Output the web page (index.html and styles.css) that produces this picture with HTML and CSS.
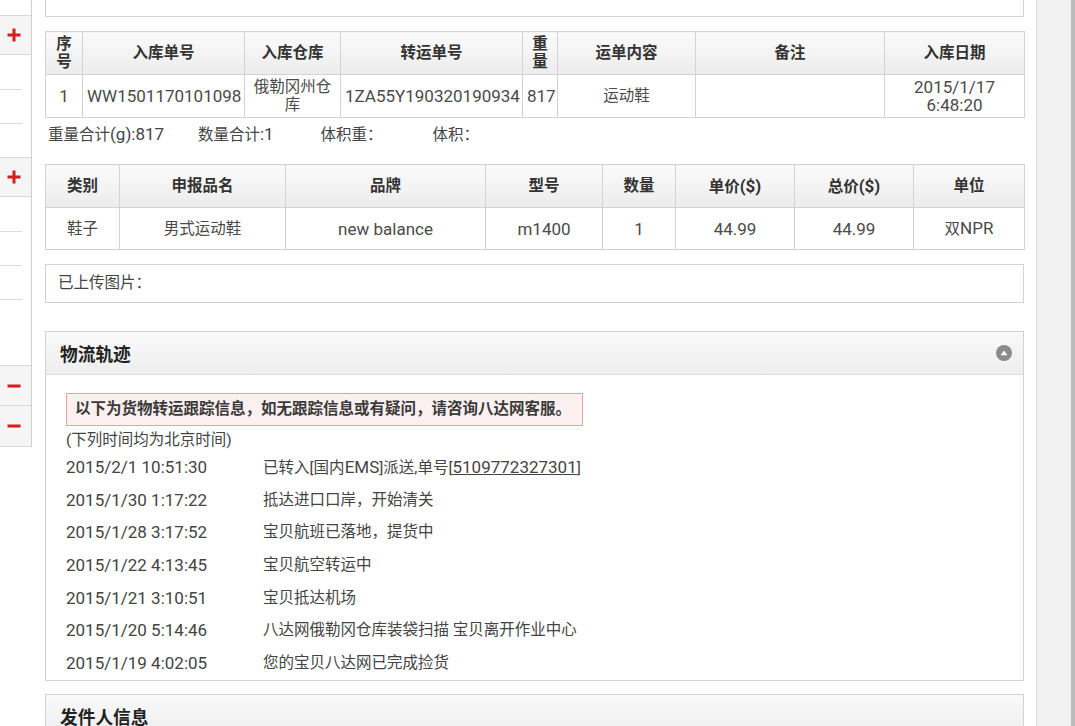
FILE: index.html
```html
<!DOCTYPE html>
<html lang="zh-CN">
<head>
<meta charset="utf-8">
<title>包裹详情</title>
<link rel="stylesheet" href="styles.css">
</head>
<body>
<div class="page">
  <aside class="sidebar">
    <div class="sb-top"></div>
    <div class="sb-head"><svg class="ico" width="14" height="14" viewBox="0 0 14 14"><path d="M7 0.5V13.5M0.5 7H13.5" stroke="#d21e1e" stroke-width="3"/></svg></div>
    <div class="sb-item"></div>
    <div class="sb-item"></div>
    <div class="sb-item"></div>
    <div class="sb-head"><svg class="ico" width="14" height="14" viewBox="0 0 14 14"><path d="M7 0.5V13.5M0.5 7H13.5" stroke="#d21e1e" stroke-width="3"/></svg></div>
    <div class="sb-item"></div>
    <div class="sb-item"></div>
    <div class="sb-item"></div>
    <div class="sb-item sb-tall"></div>
    <div class="sb-head sb-open"><svg class="ico" width="14" height="14" viewBox="0 0 14 14"><path d="M0.5 7H13.5" stroke="#d21e1e" stroke-width="3"/></svg></div>
    <div class="sb-head sb-open sb-last"><svg class="ico" width="14" height="14" viewBox="0 0 14 14"><path d="M0.5 7H13.5" stroke="#d21e1e" stroke-width="3"/></svg></div>
  </aside>

  <main class="main">
    <div class="topbox"></div>

    <table class="grid t1">
      <colgroup>
        <col style="width:37px"><col style="width:162px"><col style="width:96px"><col style="width:182px">
        <col style="width:35px"><col style="width:138px"><col style="width:189px"><col style="width:140px">
      </colgroup>
      <thead>
        <tr><th>序号</th><th>入库单号</th><th>入库仓库</th><th>转运单号</th><th>重量</th><th>运单内容</th><th>备注</th><th>入库日期</th></tr>
      </thead>
      <tbody>
        <tr>
          <td class="en">1</td>
          <td class="en">WW1501170101098</td>
          <td>俄勒冈州仓库</td>
          <td class="en">1ZA55Y190320190934</td>
          <td class="en">817</td>
          <td>运动鞋</td>
          <td></td>
          <td class="en">2015/1/17 6:48:20</td>
        </tr>
      </tbody>
    </table>

    <div class="summary">
      <span class="s1">重量合计<span class="en">(g):817</span></span>
      <span class="s2">数量合计<span class="en">:1</span></span>
      <span class="s3">体积重：</span>
      <span class="s4">体积：</span>
    </div>

    <table class="grid t2">
      <colgroup>
        <col style="width:74px"><col style="width:166px"><col style="width:200px"><col style="width:117px">
        <col style="width:73px"><col style="width:119px"><col style="width:119px"><col style="width:111px">
      </colgroup>
      <thead>
        <tr><th>类别</th><th>申报品名</th><th>品牌</th><th>型号</th><th>数量</th><th>单价<span class="en">($)</span></th><th>总价<span class="en">($)</span></th><th>单位</th></tr>
      </thead>
      <tbody>
        <tr>
          <td>鞋子</td>
          <td>男式运动鞋</td>
          <td class="en">new balance</td>
          <td class="en">m1400</td>
          <td class="en">1</td>
          <td class="en">44.99</td>
          <td class="en">44.99</td>
          <td>双<span class="en">NPR</span></td>
        </tr>
      </tbody>
    </table>

    <div class="upload">已上传图片：</div>

    <section class="panel">
      <div class="panel-head">
        <h3>物流轨迹</h3>
        <span class="toggle"><svg width="16" height="16" viewBox="0 0 16 16"><circle cx="8" cy="8" r="8" fill="#8b8b8b"/><path d="M4.6 10.2L8 5.4L11.4 10.2Z" fill="#fff"/></svg></span>
      </div>
      <div class="panel-body">
        <div class="notice">以下为货物转运跟踪信息，如无跟踪信息或有疑问，请咨询八达网客服。</div>
        <div class="tz">(下列时间均为北京时间)</div>
        <ul class="track">
          <li><span class="t en">2015/2/1 10:51:30</span><span class="d">已转入[国内<span class="en">EMS</span>]派送,单号[<a class="en" href="#">5109772327301</a>]</span></li>
          <li><span class="t en">2015/1/30 1:17:22</span><span class="d">抵达进口口岸，开始清关</span></li>
          <li><span class="t en">2015/1/28 3:17:52</span><span class="d">宝贝航班已落地，提货中</span></li>
          <li><span class="t en">2015/1/22 4:13:45</span><span class="d">宝贝航空转运中</span></li>
          <li><span class="t en">2015/1/21 3:10:51</span><span class="d">宝贝抵达机场</span></li>
          <li><span class="t en">2015/1/20 5:14:46</span><span class="d">八达网俄勒冈仓库装袋扫描 宝贝离开作业中心</span></li>
          <li><span class="t en">2015/1/19 4:02:05</span><span class="d">您的宝贝八达网已完成捡货</span></li>
        </ul>
      </div>
    </section>

    <section class="panel">
      <div class="panel-head">
        <h3>发件人信息</h3>
      </div>
      <div class="panel-body tall"></div>
    </section>
  </main>

  <div class="gutter"></div>
</div>
</body>
</html>
```

FILE: styles.css
```css
* { box-sizing: border-box; }
html, body { margin: 0; padding: 0; }
body {
  font-family: Roboto, "Noto Sans CJK SC", sans-serif;
  font-size: 15.5px;
  color: #444;
  background: #fff;
  overflow: hidden;
}
.en { font-size: 17px; }

.page { display: flex; align-items: stretch; min-height: 726px; }

/* left accordion menu */
.sidebar {
  width: 32px;
  flex: none;
  align-self: flex-start;
  border-right: 1px solid #cfcfcf;
}
.sb-top { height: 15px; }
.sb-head {
  height: 40px;
  border-top: 1px solid #d8d8d8;
  border-bottom: 1px solid #d8d8d8;
  background: #f5f5f5;
  display: flex;
  align-items: center;
  padding-left: 7px;
}
.sb-head.sb-open { height: 41px; }
.sb-head.sb-last { border-top: 0; }
.ico { display: block; }
.sb-item { height: 34px; }
.sb-item + .sb-item {
  background: linear-gradient(#dcdcdc, #dcdcdc) no-repeat 0 0 / 22px 1px;
}
.sb-item.sb-tall { height: 66px; }

/* main column */
.main {
  flex: 1;
  min-width: 0;
  padding: 0 12px 0 13px;
}
.topbox {
  height: 17px;
  border: 1px solid #d3d3d3;
  border-top: 0;
}

.grid {
  width: 100%;
  table-layout: fixed;
  border-collapse: collapse;
  border: 1px solid #cdcdcd;
}
.grid th, .grid td {
  border: 1px solid #d3d3d3;
  padding: 0 4px;
  text-align: center;
  vertical-align: middle;
  line-height: 18px;
  white-space: normal;
}
.grid th {
  height: 43px;
  background: linear-gradient(#fbfbfb, #ececec);
  color: #333;
  font-weight: bold;
}
.grid td { height: 43px; color: #4a4a4a; }
.t1 { margin-top: 14px; }
.t2 td { height: 42px; }

.summary {
  padding: 4px 0 0 3px;
  line-height: 24px;
  height: 46px;
  white-space: nowrap;
}
.summary .s1 { margin-right: 30px; }
.summary .s2 { margin-right: 43px; }
.summary .s3 { margin-right: 46px; }

.upload {
  margin-top: 14px;
  height: 39px;
  line-height: 37px;
  border: 1px solid #d3d3d3;
  padding-left: 12px;
}

.panel {
  margin-top: 28px;
  border: 1px solid #d3d3d3;
}
.panel + .panel { margin-top: 13px; }
.panel-head {
  height: 43px;
  border-bottom: 1px solid #dcdcdc;
  background: linear-gradient(#f9f9f9, #eeeeee);
  display: flex;
  align-items: center;
  justify-content: space-between;
  padding: 0 11px 0 14px;
}
.panel-head h3 {
  margin: 0;
  font-size: 17.7px;
  font-weight: bold;
  color: #222;
}
.toggle svg { display: block; }

.panel-body { padding: 18px 20px 0 20px; }
.panel-body.tall { height: 200px; }
.notice {
  display: inline-block;
  height: 33px;
  line-height: 31px;
  padding: 0 11px 0 8px;
  border: 1px solid #e6a3a3;
  background: #fcf0f0;
  color: #3a3a3a;
  font-weight: bold;
}
.tz {
  margin-top: 3px;
  line-height: 22px;
  height: 22px;
}
.track {
  list-style: none;
  margin: 0;
  padding: 0;
}
.track li {
  display: flex;
  height: 32.67px;
  line-height: 32.67px;
  white-space: nowrap;
}
.track .t { width: 197px; flex: none; }
.track a { color: #444; text-decoration: underline; }

/* right rail */
.gutter {
  width: 39px;
  flex: none;
  border-left: 1px solid #dcdcdc;
  background: linear-gradient(to right, #f2f2f2 34px, #bababa 34px);
}
```
